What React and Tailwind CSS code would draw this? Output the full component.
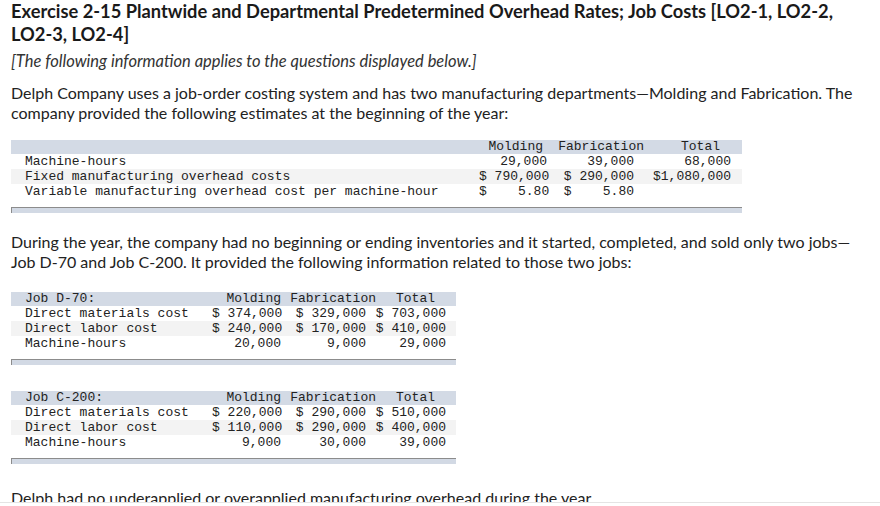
import React from "react";

const mono = { fontFamily: '"Liberation Mono", "DejaVu Sans Mono", monospace' };

const Row = ({ shaded, children }) => (
  <div className={`flex h-[15px] items-center pl-[14px] ${shaded ? "bg-[#f3f3f3]" : ""}`}>
    {children}
  </div>
);

const EndBar = ({ width }) => (
  <div className={`mt-2 h-[6px] ${width} border-t border-l border-[#8c8c8c] bg-[#d2d9e4]`}></div>
);

const JobTable = ({ name, rows }) => (
  <div className="w-[445px] text-[13px] text-[#222]" style={mono}>
    <div className="flex h-[14px] items-center bg-[#d3dae5] pl-[14px]">
      <span className="w-[187px] whitespace-pre">{name}</span>
      <span className="w-[69px] text-right">Molding</span>
      <span className="w-[95px] text-right">Fabrication</span>
      <span className="w-[59px] text-right">Total</span>
    </div>
    {rows.map((r, i) => (
      <Row key={i} shaded={i === 1}>
        <span className="w-[187px] whitespace-pre">{r[0]}</span>
        <span className="w-[69px] text-right whitespace-pre">{r[1]}</span>
        <span className="w-[85px] text-right whitespace-pre">{r[2]}</span>
        <span className="w-[80px] text-right whitespace-pre">{r[3]}</span>
      </Row>
    ))}
    <EndBar width="w-[445px]" />
  </div>
);

export default function App() {
  return (
    <div className="h-[506px] w-[880px] bg-white">
      <div
        className="h-[503px] overflow-hidden border-b border-[#e4e4e4] px-[11px] text-[#222]"
        style={{ fontFamily: 'Lato, "Open Sans", sans-serif' }}
      >
        {/* Title */}
        <h1 className="text-[18.3px] font-bold leading-[23px] text-[#1a1a1a]">
          Exercise 2-15 Plantwide and Departmental Predetermined Overhead Rates; Job Costs [LO2-1, LO2-2,
          <br />
          LO2-3, LO2-4]
        </h1>

        <p className="mt-[5px] text-[16.5px] italic leading-[20px] text-[#333]">
          [The following information applies to the questions displayed below.]
        </p>

        <p className="mt-[12px] text-[16px] leading-[20px]">
          Delph Company uses a job-order costing system and has two manufacturing departments—Molding and Fabrication. The
          <br />
          company provided the following estimates at the beginning of the year:
        </p>

        {/* Estimates table */}
        <div className="mt-[17px] w-[731px] text-[13px] text-[#222]" style={mono}>
          <div className="flex h-[14px] items-center bg-[#d3dae5] pl-[14px]">
            <span className="w-[454px]"></span>
            <span className="w-[64px] text-right">Molding</span>
            <span className="w-[101px] text-right">Fabrication</span>
            <span className="w-[76px] text-right">Total</span>
          </div>
          <Row>
            <span className="w-[454px]">Machine-hours</span>
            <span className="w-[68px] text-right">29,000</span>
            <span className="w-[87px] text-right">39,000</span>
            <span className="w-[97px] text-right">68,000</span>
          </Row>
          <Row shaded>
            <span className="w-[454px]">Fixed manufacturing overhead costs</span>
            <span className="w-[68px] text-right whitespace-pre">$ 790,000</span>
            <span className="w-[87px] text-right whitespace-pre">$ 290,000</span>
            <span className="w-[97px] text-right">$1,080,000</span>
          </Row>
          <Row>
            <span className="w-[454px]">Variable manufacturing overhead cost per machine-hour</span>
            <span className="w-[68px] text-right whitespace-pre">{"$    5.80"}</span>
            <span className="w-[87px] text-right whitespace-pre">{"$    5.80"}</span>
            <span className="w-[97px]"></span>
          </Row>
          <EndBar width="w-[731px]" />
        </div>

        <p className="mt-[19px] text-[16px] leading-[20px]">
          During the year, the company had no beginning or ending inventories and it started, completed, and sold only two jobs—
          <br />
          Job D-70 and Job C-200. It provided the following information related to those two jobs:
        </p>

        <div className="mt-[20px]">
          <JobTable
            name="Job D-70:"
            rows={[
              ["Direct materials cost", "$ 374,000", "$ 329,000", "$ 703,000"],
              ["Direct labor cost", "$ 240,000", "$ 170,000", "$ 410,000"],
              ["Machine-hours", "20,000", "9,000", "29,000"],
            ]}
          />
        </div>

        <div className="mt-[26px]">
          <JobTable
            name="Job C-200:"
            rows={[
              ["Direct materials cost", "$ 220,000", "$ 290,000", "$ 510,000"],
              ["Direct labor cost", "$ 110,000", "$ 290,000", "$ 400,000"],
              ["Machine-hours", "9,000", "30,000", "39,000"],
            ]}
          />
        </div>

        <p className="mt-[24px] text-[16px] leading-[20px]">
          Delph had no underapplied or overapplied manufacturing overhead during the year.
        </p>
      </div>
    </div>
  );
}
